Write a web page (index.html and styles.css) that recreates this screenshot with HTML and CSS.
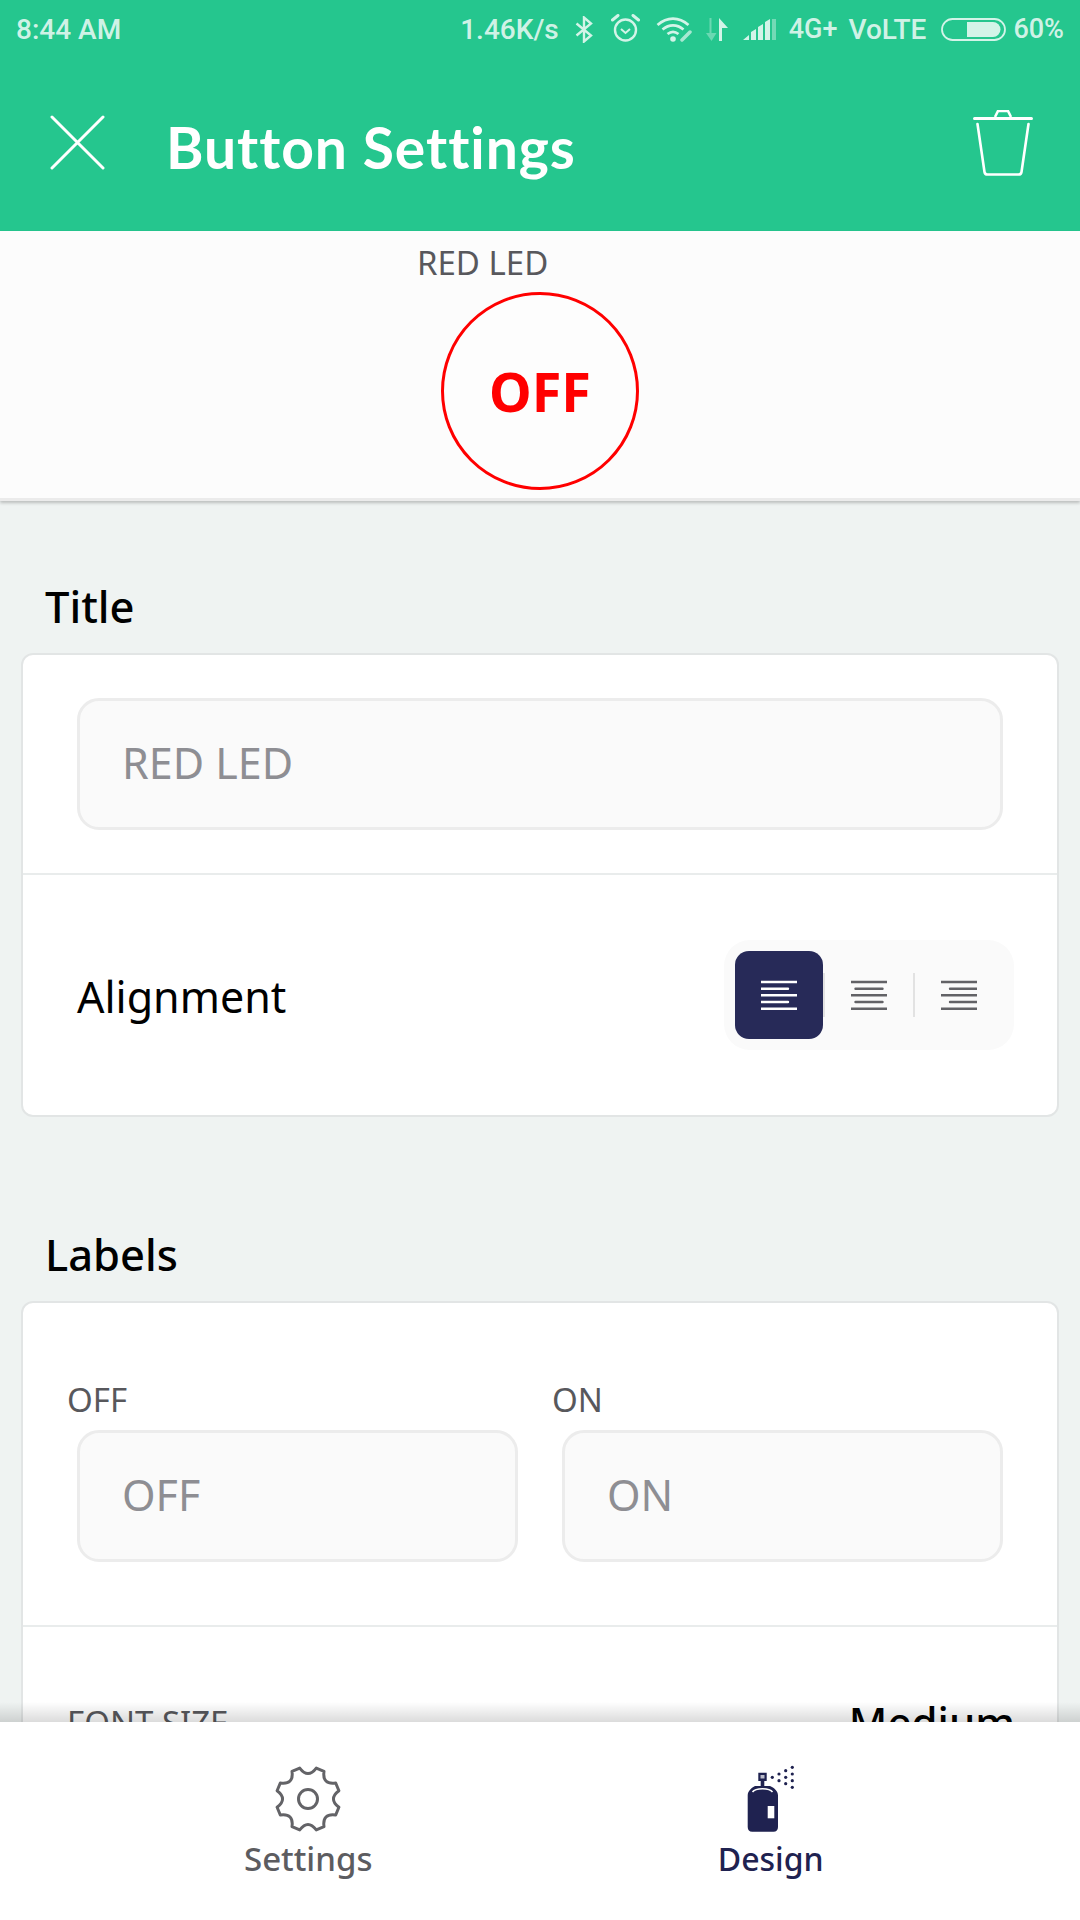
FILE: index.html
```
<!DOCTYPE html>
<html lang="en">
<head>
<meta charset="utf-8">
<title>Button Settings</title>
<link rel="stylesheet" href="styles.css">
</head>
<body>
<div class="page">
  <div class="topbar">
    <div class="status">
      <span class="clock">8:44 AM</span>
      <div class="status-right">
        <span>1.46K/s</span>
        <svg class="si si-bt" width="19" height="27" viewBox="0 0 19 27"><path d="M1.5 7.5 16 19.5 9 25.5V1.500L16 7.500 1.500 19.500" fill="none" stroke="currentColor" stroke-width="2.4"/></svg>
        <svg class="si si-alarm" width="29" height="28" viewBox="0 0 29 28"><circle cx="14.500" cy="16" r="10.500" fill="none" stroke="currentColor" stroke-width="2.400"/><path d="M10 15l4.500 4 4.500-4" fill="none" stroke="currentColor" stroke-width="2"/><path d="M1.500 6 7 1.500M27.500 6 22 1.500" stroke="currentColor" stroke-width="3" stroke-linecap="round"/></svg>
        <svg class="si si-wifi" width="37" height="26" viewBox="0 0 37 26"><path d="M1.500 9C11 .5 23 .5 32.500 9M6.500 13.500c6.500-5.500 14.500-5.500 21 0M11.500 18c3.500-2.800 7.500-2.800 11 0" fill="none" stroke="currentColor" stroke-width="2.700"/><circle cx="17" cy="23" r="2.800" fill="currentColor"/><path d="M26 24l8-8" stroke="currentColor" stroke-width="3.500" stroke-linecap="round" fill="none" opacity=".75"/></svg>
        <svg class="si si-arrows" width="26" height="23" viewBox="0 0 26 23"><path d="M7.500 0v15h5L7.500 23 2 15h3.500V0z" fill="currentColor" opacity=".4"/><path d="M15 23V0l9 10h-6v13z" fill="currentColor"/></svg>
        <svg class="si si-signal" width="34" height="22" viewBox="0 0 34 22"><path d="M0 22l6-5v5zM8 22v-8l5-3v11zM15 22V9l5-3v16zM22 22V4l5-3v21z" fill="currentColor"/><path d="M29 22V1h4v21z" fill="currentColor" opacity=".45"/></svg>
        <span class="st-4g">4G+</span>
        <span class="st-volte">VoLTE</span>
        <svg class="si si-batt" width="65" height="23" viewBox="0 0 65 23"><rect x="1" y="1" width="63" height="21" rx="10.500" fill="none" stroke="currentColor" stroke-width="1.800"/><path d="M26 4h26a7.500 7.500 0 0 1 0 15H26z" fill="currentColor"/></svg>
        <span class="st-pct">60%</span>
      </div>
    </div>
    <div class="header">
      <svg class="close" width="55" height="55" viewBox="0 0 55 55"><path d="M2 2 53 53M53 2 2 53" stroke="#fff" stroke-width="3" stroke-linecap="round"/></svg>
      <h1 class="title">Button Settings</h1>
      <svg class="trash" width="60" height="66" viewBox="0 0 60 66"><path d="M1.500 8.500h57" stroke="#fff" stroke-width="3" stroke-linecap="round"/><path d="M22 7l3-6h10l3 6" fill="none" stroke="#fff" stroke-width="2.600"/><path d="M4.500 14l7 48c.2 1.500 1 2.500 3 2.500h31c2 0 2.800-1 3-2.500l7-48" fill="none" stroke="#fff" stroke-width="2.600" stroke-linecap="round"/></svg>
    </div>
  </div>

  <div class="preview">
    <div class="preview-label">RED LED</div>
    <div class="round-btn">OFF</div>
  </div>

  <main class="content">
    <h2 class="sec-title first">Title</h2>
    <section class="card">
      <div class="row-input">
        <div class="input">RED LED</div>
      </div>
      <div class="row-align">
        <span class="row-name">Alignment</span>
        <div class="seg">
          <div class="seg-btn active">
            <svg width="36" height="30" viewBox="0 0 36 30"><path d="M0 2h36M0 8.700h27M0 15.300h36M0 22h27M0 28.700h36"/></svg>
          </div>
          <div class="seg-sep"></div>
          <div class="seg-btn">
            <svg width="36" height="30" viewBox="0 0 36 30"><path d="M0 2h36M4.500 8.700h27M0 15.300h36M4.500 22h27M0 28.700h36"/></svg>
          </div>
          <div class="seg-sep"></div>
          <div class="seg-btn">
            <svg width="36" height="30" viewBox="0 0 36 30"><path d="M0 2h36M9 8.700h27M0 15.300h36M9 22h27M0 28.700h36"/></svg>
          </div>
        </div>
      </div>
    </section>

    <h2 class="sec-title">Labels</h2>
    <section class="card">
      <div class="fields">
        <div class="field">
          <div class="field-label">OFF</div>
          <div class="input">OFF</div>
        </div>
        <div class="field">
          <div class="field-label">ON</div>
          <div class="input">ON</div>
        </div>
      </div>
      <div class="row-font">
        <span class="field-label">FONT SIZE</span>
        <span class="row-value">Medium</span>
      </div>
    </section>
  </main>

  <nav class="tabs">
    <div class="tab">
      <svg width="70" height="70" viewBox="-35 -35 70 70"><path class="gear" d="M8.280-30.900 16-27.700Q14.100-14.100 27.700-16L30.900-8.280Q20 0 30.900 8.280L27.700 16Q14.100 14.100 16 27.700L8.280 30.900Q0 20-8.280 30.900L-16 27.700Q-14.100 14.100-27.700 16L-30.900 8.280Q-20 0-30.900-8.280L-27.700-16Q-14.100-14.100-16-27.700L-8.280-30.900Q0-20 8.280-30.900Z"/><circle class="gear" r="9.500"/></svg>
      <span class="tab-name">Settings</span>
    </div>
    <div class="tab tab-active">
      <svg width="70" height="70" viewBox="0 0 70 70"><path class="spray" d="M22.300 8.700h8.400v8.300h-2.400v5h5.700c4 1.500 8 5 8 9.500V63c0 3-1.700 4.700-4.500 4.700H16.200c-2.800 0-4.500-1.700-4.500-4.700V31.500c0-4.500 4-8 7.300-9.500h5.700v-5h-2.400z"/><rect x="24.500" y="11" width="4" height="3.500" fill="#fff" opacity=".7"/><rect x="31.700" y="42" width="6.600" height="12.300" fill="#fff"/><path d="M16.500 28c3-4.500 17-4.500 20 0" stroke="#fff" stroke-width="1.500" fill="none"/><g class="dots"><circle cx="36.300" cy="13.300" r="1.600"/><circle cx="43" cy="10" r="1.600"/><circle cx="43" cy="16.700" r="1.600"/><circle cx="49.700" cy="6.700" r="1.600"/><circle cx="49.700" cy="13.300" r="1.600"/><circle cx="49.700" cy="19.700" r="1.600"/><circle cx="56.300" cy="3.300" r="1.600"/><circle cx="56.300" cy="10" r="1.600"/><circle cx="56.300" cy="16.700" r="1.600"/><circle cx="56.300" cy="23.300" r="1.600"/></g></svg>
      <span class="tab-name">Design</span>
    </div>
  </nav>
</div>
</body>
</html>
```
FILE: styles.css
```
* { box-sizing: border-box; }
html, body { margin: 0; padding: 0; }
body { width: 1080px; height: 1920px; overflow: hidden; font-family: "Noto Sans", "Open Sans", sans-serif; background: #eff3f2; }
.page { width: 1080px; height: 1920px; display: flex; flex-direction: column; overflow: hidden; }

.topbar { background: #25c68e; height: 231px; flex: none; }
.status { height: 58px; display: flex; align-items: center; justify-content: space-between; padding: 0 16px 0 16px; color: rgba(255,255,255,.8); font-family: Roboto, sans-serif; font-weight: 500; font-size: 28px; }
.status-right { display: flex; align-items: center; }
.si { flex: none; display: block; }
.si-bt { margin-left: 16px; }
.si-alarm { margin-left: 17px; margin-top: -2px; }
.si-wifi { margin-left: 16px; }
.si-arrows { margin-left: 11px; }
.si-signal { margin-left: 13px; }
.st-4g { margin-left: 12px; font-size: 27px; }
.st-volte { margin-left: 11px; }
.si-batt { margin-left: 15px; }
.st-pct { margin-left: 7px; font-size: 27px; }

.header { height: 173px; display: flex; align-items: center; padding: 0 47px 0 50px; }
.close { flex: none; margin-top: -4px; }
.title { margin: 5px 0 0 61px; flex: 1; font-family: Lato, sans-serif; font-weight: 700; font-size: 57px; letter-spacing: .95px; font-variant-ligatures: none; line-height: 70px; color: #fff; }
.trash { flex: none; margin-top: -4px; }

.preview { flex: none; height: 270px; background: #fcfcfc; border-bottom: 3px solid #ebebeb; box-shadow: 0 2px 3px rgba(0,0,0,.22); position: relative; z-index: 1; padding-top: 14px; }
.preview-label { padding-left: 417px; font-size: 33px; line-height: 36px; color: #58585c; }
.round-btn { width: 198px; height: 198px; margin: 11px auto 0; border: 3px solid #f00; border-radius: 50%; display: flex; align-items: center; justify-content: center; color: #f00; font-weight: 700; font-size: 54px; line-height: 1; background: #fdfdfd; }

.content { flex: 1; min-height: 0; overflow: hidden; padding: 0 21px; }
.sec-title { margin: 112px 0 22px 24px; font-size: 43.500px; font-weight: 500; line-height: 50px; color: #000; }
.sec-title.first { margin-top: 80px; }
.card { background: #fff; border: 2px solid #e2e5e5; border-radius: 12px; }
.row-input { padding: 43px 54px 43px 54px; border-bottom: 2px solid #e9ecec; }
.input { height: 132px; background: #fafafa; border: 3px solid #ececec; border-radius: 22px; display: flex; align-items: center; padding: 0 0 3px 42px; font-size: 43px; color: #8e8e93; }
.row-align { height: 240px; display: flex; align-items: center; justify-content: space-between; padding: 0 43px 0 54px; }
.row-name { font-size: 43px; color: #000; line-height: 56px; margin-top: 3px; }
.seg { width: 290px; height: 110px; padding: 11px; background: #fafafa; border-radius: 26px; display: flex; align-items: center; }
.seg-btn { width: 88px; height: 88px; display: flex; align-items: center; justify-content: center; border-radius: 14px; }
.seg-btn svg { display: block; fill: none; stroke: #626266; stroke-width: 2.400; stroke-linecap: round; }
.seg-btn.active { background: #272a58; }
.seg-btn.active svg { stroke: #fff; }
.seg-sep { width: 2px; height: 44px; background: #e2e2e2; flex: none; }

.fields { display: grid; grid-template-columns: 485px 485px; padding: 79px 0 63px 44px; border-bottom: 2px solid #e9ecec; }
.field-label { font-size: 33px; line-height: 36px; color: #58585c; }
.field .input { width: 441px; margin: 12px 0 0 10px; }
.row-font { display: flex; justify-content: space-between; align-items: flex-start; padding: 78px 42px 40px 44px; }
.row-value { font-size: 42px; font-weight: 500; line-height: 50px; color: #000; margin-top: -8px; }

.tabs { flex: none; height: 198px; background: #fff; display: flex; padding: 0 78px 0 77px; position: relative; z-index: 2; }
.tabs::before { content: ""; position: absolute; left: 0; right: 0; top: -20px; height: 20px; background: linear-gradient(to bottom, rgba(0,0,0,0), rgba(0,0,0,.14)); }
.tab { flex: 1; display: flex; flex-direction: column; align-items: center; padding-top: 42px; color: #5c5c60; }
.tab svg { display: block; }
.tab-name { font-size: 33px; font-weight: 500; line-height: 44px; margin-top: 3px; }
.tab-active { color: #1f2250; }
.tab-active .tab-name { font-size: 32px; }
.gear { fill: none; stroke: #636367; stroke-width: 3; stroke-linejoin: round; }
.spray { fill: #1f2250; }
.dots { fill: #1f2250; }
```
